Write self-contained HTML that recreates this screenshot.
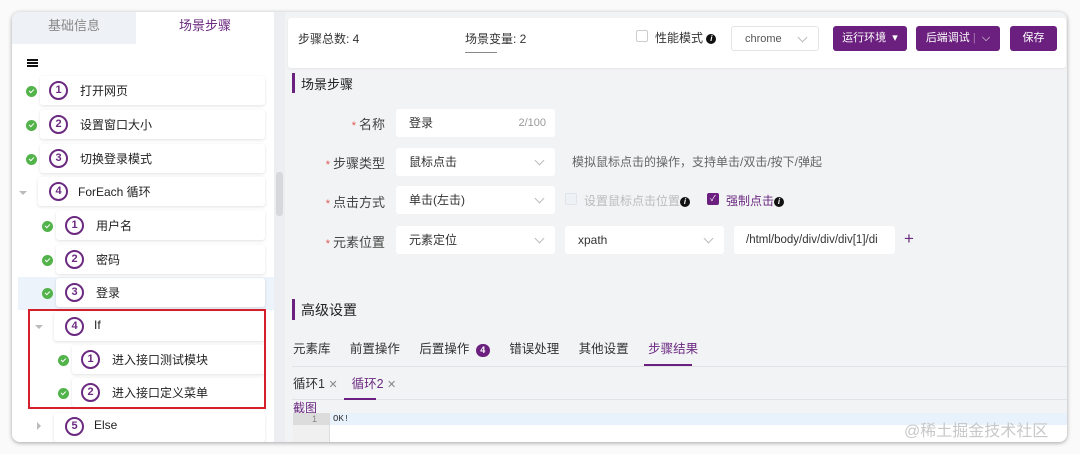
<!DOCTYPE html>
<html><head><meta charset="utf-8"><style>
*{box-sizing:border-box;margin:0;padding:0}
body{width:1080px;height:454px;background:#fafafa;font-family:"Liberation Sans","Noto Sans CJK SC",sans-serif;font-size:12px;color:#333;position:relative;overflow:hidden}
.a{position:absolute}
.card{left:12px;top:12px;width:1055px;height:430px;background:#f2f3f5;border-radius:8px;box-shadow:0 1px 4px rgba(0,0,0,.35);overflow:hidden}
.left{left:0;top:0;width:262px;height:430px;background:#fff}
.item{position:absolute;height:29px;background:#fff;box-shadow:0 1px 3px rgba(0,0,0,.12);border-radius:3px;right:9px}
.num{position:absolute;width:19px;height:19px;border:2px solid #6b2a80;border-radius:50%;font-size:11px;font-weight:bold;color:#6b2a80;text-align:center;line-height:15px}
.chk{position:absolute;width:11px;height:11px;border-radius:50%;background:#52b34a}
.chk:after{content:"";position:absolute;left:3px;top:3px;width:4px;height:2px;border-left:1.3px solid #fff;border-bottom:1.3px solid #fff;transform:rotate(-45deg)}
.t{position:absolute;font-size:12px;color:#222;margin-top:-2px}
.tri{position:absolute;width:0;height:0;border-left:4px solid transparent;border-right:4px solid transparent;border-top:4px solid #bbb}
.trir{position:absolute;width:0;height:0;border-top:4px solid transparent;border-bottom:4px solid transparent;border-left:4px solid #bbb}
.inp{position:absolute;height:28px;background:#fff;border-radius:3px;font-size:12px;color:#333;padding-left:13px;line-height:28px}
.arr{position:absolute;right:12px;top:9px;width:7px;height:7px;border-right:1px solid #bbb;border-bottom:1px solid #bbb;transform:rotate(45deg)}
.lbl{position:absolute;font-size:13px;color:#444;text-align:right;width:80px}
.lbl b{color:#e0564f;font-weight:normal;font-size:11px;margin-right:3px}
.btn{position:absolute;top:14px;height:25px;background:#6b1f7e;color:#fff;border-radius:3px;font-size:11px;line-height:25px;text-align:center}
.info{display:inline-block;width:10px;height:10px;border-radius:50%;background:#111;color:#fff;font-size:8px;line-height:10px;text-align:center;font-style:italic;font-weight:bold;vertical-align:middle}
</style></head><body>
<div class="a card">
 <div class="a left">
  <div class="a" style="left:0;top:0;width:124px;height:32px;background:#eef1f5;color:#888;font-size:13px;text-align:center;line-height:28px">基础信息</div>
  <div class="a" style="left:124px;top:0;width:138px;height:32px;color:#6b2a80;font-size:13px;text-align:center;line-height:28px">场景步骤</div>
  <div class="a" style="left:15px;top:47px;width:11px;height:2px;background:#111;box-shadow:0 3px 0 #111,0 6px 0 #111"></div>
  <div class="a" style="left:6px;top:265px;width:256px;height:33px;background:#edf3fb"></div>

  <div class="chk" style="left:14px;top:74px"></div><div class="item" style="left:28px;top:64px"></div><div class="num" style="left:37px;top:69px">1</div><div class="t" style="left:68px;top:72px">打开网页</div>
  <div class="chk" style="left:14px;top:108px"></div><div class="item" style="left:28px;top:98px"></div><div class="num" style="left:37px;top:103px">2</div><div class="t" style="left:68px;top:106px">设置窗口大小</div>
  <div class="chk" style="left:14px;top:142px"></div><div class="item" style="left:28px;top:132px"></div><div class="num" style="left:37px;top:137px">3</div><div class="t" style="left:68px;top:140px">切换登录模式</div>
  <div class="tri" style="left:7px;top:179px"></div><div class="item" style="left:26px;top:165px"></div><div class="num" style="left:37px;top:170px">4</div><div class="t" style="left:66px;top:173px">ForEach 循环</div>

  <div class="chk" style="left:30px;top:209px"></div><div class="item" style="left:44px;top:199px"></div><div class="num" style="left:53px;top:204px">1</div><div class="t" style="left:84px;top:207px">用户名</div>
  <div class="chk" style="left:30px;top:243px"></div><div class="item" style="left:44px;top:233px"></div><div class="num" style="left:53px;top:238px">2</div><div class="t" style="left:84px;top:241px">密码</div>
  <div class="chk" style="left:30px;top:276px"></div><div class="item" style="left:44px;top:266px"></div><div class="num" style="left:53px;top:271px">3</div><div class="t" style="left:84px;top:274px">登录</div>
  <div class="tri" style="left:23px;top:313px"></div><div class="item" style="left:42px;top:300px"></div><div class="num" style="left:53px;top:305px">4</div><div class="t" style="left:82px;top:308px">If</div>
  <div class="chk" style="left:46px;top:343px"></div><div class="item" style="left:60px;top:333px"></div><div class="num" style="left:69px;top:338px">1</div><div class="t" style="left:100px;top:341px">进入接口测试模块</div>
  <div class="chk" style="left:46px;top:376px"></div><div class="item" style="left:60px;top:366px"></div><div class="num" style="left:69px;top:371px">2</div><div class="t" style="left:100px;top:374px">进入接口定义菜单</div>
  <div class="trir" style="left:25px;top:410px"></div><div class="item" style="left:42px;top:401px"></div><div class="num" style="left:53px;top:405px">5</div><div class="t" style="left:82px;top:408px">Else</div>
  <div class="a" style="left:16px;top:297px;width:238px;height:100px;border:2px solid #d4202c"></div>
 </div>
 <div class="a" style="left:262px;top:0;width:11px;height:430px;background:#eceef1"></div>
 <div class="a" style="left:264px;top:160px;width:7px;height:44px;background:#d6d8dc;border-radius:3px"></div>

 <div class="a" style="left:276px;top:6px;width:778px;height:50px;background:#fff;border-radius:3px;box-shadow:0 1px 2px rgba(0,0,0,.06)"></div>
 <div class="a" style="left:286px;top:18px;font-size:12px;color:#333">步骤总数: 4</div>
 <div class="a" style="left:453px;top:18px;font-size:12px;color:#333">场景变量: 2</div>
 <div class="a" style="left:453px;top:40px;width:32px;height:1px;background:#888"></div>
 <div class="a" style="left:624px;top:18px;width:12px;height:12px;border:1px solid #ccc;border-radius:2px;background:#fff"></div>
 <div class="a" style="left:643px;top:17px;font-size:12px;color:#333">性能模式 <span class="info">i</span></div>
 <div class="inp" style="left:719px;top:14px;width:88px;height:25px;line-height:25px;border:1px solid #e4e4e4;font-size:11px;color:#555">chrome<span class="arr" style="top:7px"></span></div>
 <div class="btn" style="left:821px;width:74px">运行环境 &nbsp;▾</div>
 <div class="btn" style="left:904px;width:84px">后端调试 <span style="color:#a77bb5">|</span> &nbsp;⌵</div>
 <div class="btn" style="left:998px;width:47px">保存</div>

 <div class="a" style="left:280px;top:61px;width:3px;height:20px;background:#6b1f7e"></div>
 <div class="a" style="left:289px;top:62px;font-size:13px;color:#222">场景步骤</div>

 <div class="lbl" style="left:293px;top:102px"><b>*</b>名称</div>
 <div class="inp" style="left:384px;top:97px;width:159px">登录<span style="position:absolute;right:9px;font-size:11px;color:#999">2/100</span></div>
 <div class="lbl" style="left:293px;top:141px"><b>*</b>步骤类型</div>
 <div class="inp" style="left:384px;top:136px;width:159px">鼠标点击<span class="arr"></span></div>
 <div class="a" style="left:560px;top:141px;font-size:12px;color:#666">模拟鼠标点击的操作，支持单击/双击/按下/弹起</div>
 <div class="lbl" style="left:293px;top:180px"><b>*</b>点击方式</div>
 <div class="inp" style="left:384px;top:174px;width:159px">单击(左击)<span class="arr"></span></div>
 <div class="a" style="left:553px;top:181px;width:12px;height:12px;border:1px solid #dfe3ea;background:#eef1f6;border-radius:2px"></div>
 <div class="a" style="left:572px;top:180px;font-size:12px;color:#bbb">设置鼠标点击位置<span class="info">i</span></div>
 <div class="a" style="left:695px;top:181px;width:12px;height:12px;background:#6b1f7e;border-radius:2px;color:#fff;font-size:8px;text-align:center;line-height:12px">✓</div>
 <div class="a" style="left:714px;top:180px;font-size:12px;color:#6b2a80">强制点击<span class="info">i</span></div>
 <div class="lbl" style="left:293px;top:220px"><b>*</b>元素位置</div>
 <div class="inp" style="left:384px;top:214px;width:159px">元素定位<span class="arr"></span></div>
 <div class="inp" style="left:553px;top:214px;width:159px">xpath<span class="arr"></span></div>
 <div class="inp" style="left:722px;top:214px;width:161px;font-size:11.5px;padding-left:12px">/html/body/div/div/div[1]/di</div>
 <div class="a" style="left:892px;top:217px;font-size:17px;color:#6b2a80">+</div>

 <div class="a" style="left:280px;top:287px;width:3px;height:21px;background:#6b1f7e"></div>
 <div class="a" style="left:289px;top:288px;font-size:14px;color:#222">高级设置</div>
 <div class="a" style="left:281px;top:326px;font-size:12.5px;color:#333;word-spacing:3px">元素库 &nbsp; 前置操作 &nbsp; 后置操作 <span style="display:inline-block;width:14px;height:13px;border-radius:7px;background:#6b1f7e;color:#fff;font-size:9px;text-align:center;line-height:13px;font-weight:bold;word-spacing:0">4</span> &nbsp; 错误处理 &nbsp; 其他设置 &nbsp; <span style="color:#6b2a80">步骤结果</span></div>
 <div class="a" style="left:280px;top:354px;width:775px;height:1px;background:#e2e3e6"></div>
 <div class="a" style="left:632px;top:352px;width:48px;height:2px;background:#6b1f7e"></div>
 <div class="a" style="left:281px;top:361px;font-size:12.5px;color:#333">循环1 <span style="color:#888;font-size:11px">✕</span> &nbsp;&nbsp; <span style="color:#6b2a80">循环2</span> <span style="color:#888;font-size:11px">✕</span></div>
 <div class="a" style="left:280px;top:387px;width:775px;height:1px;background:#e2e3e6"></div>
 <div class="a" style="left:332px;top:386px;width:32px;height:2px;background:#6b1f7e"></div>
 <div class="a" style="left:281px;top:387px;font-size:12px;color:#6b2a80">截图</div>
 <div class="a" style="left:281px;top:401px;width:774px;height:29px;background:#fff"></div>
 <div class="a" style="left:281px;top:401px;width:774px;height:12px;background:#e8f2fc"></div>
 <div class="a" style="left:281px;top:401px;width:37px;height:29px;background:#f0f0f0;border-right:1px solid #ddd"></div>
 <div class="a" style="left:281px;top:401px;width:37px;height:12px;background:#dcdcdc;font-size:9px;color:#888;text-align:right;padding-right:13px;line-height:12px">1</div>
 <div class="a" style="left:321px;top:401px;font-size:9px;line-height:12px;font-family:'Liberation Mono',monospace;color:#333">OK!</div>
</div>
<div class="a" style="left:904px;top:417px;font-size:16px;color:#c8c8c8">@稀土掘金技术社区</div>
</body></html>
